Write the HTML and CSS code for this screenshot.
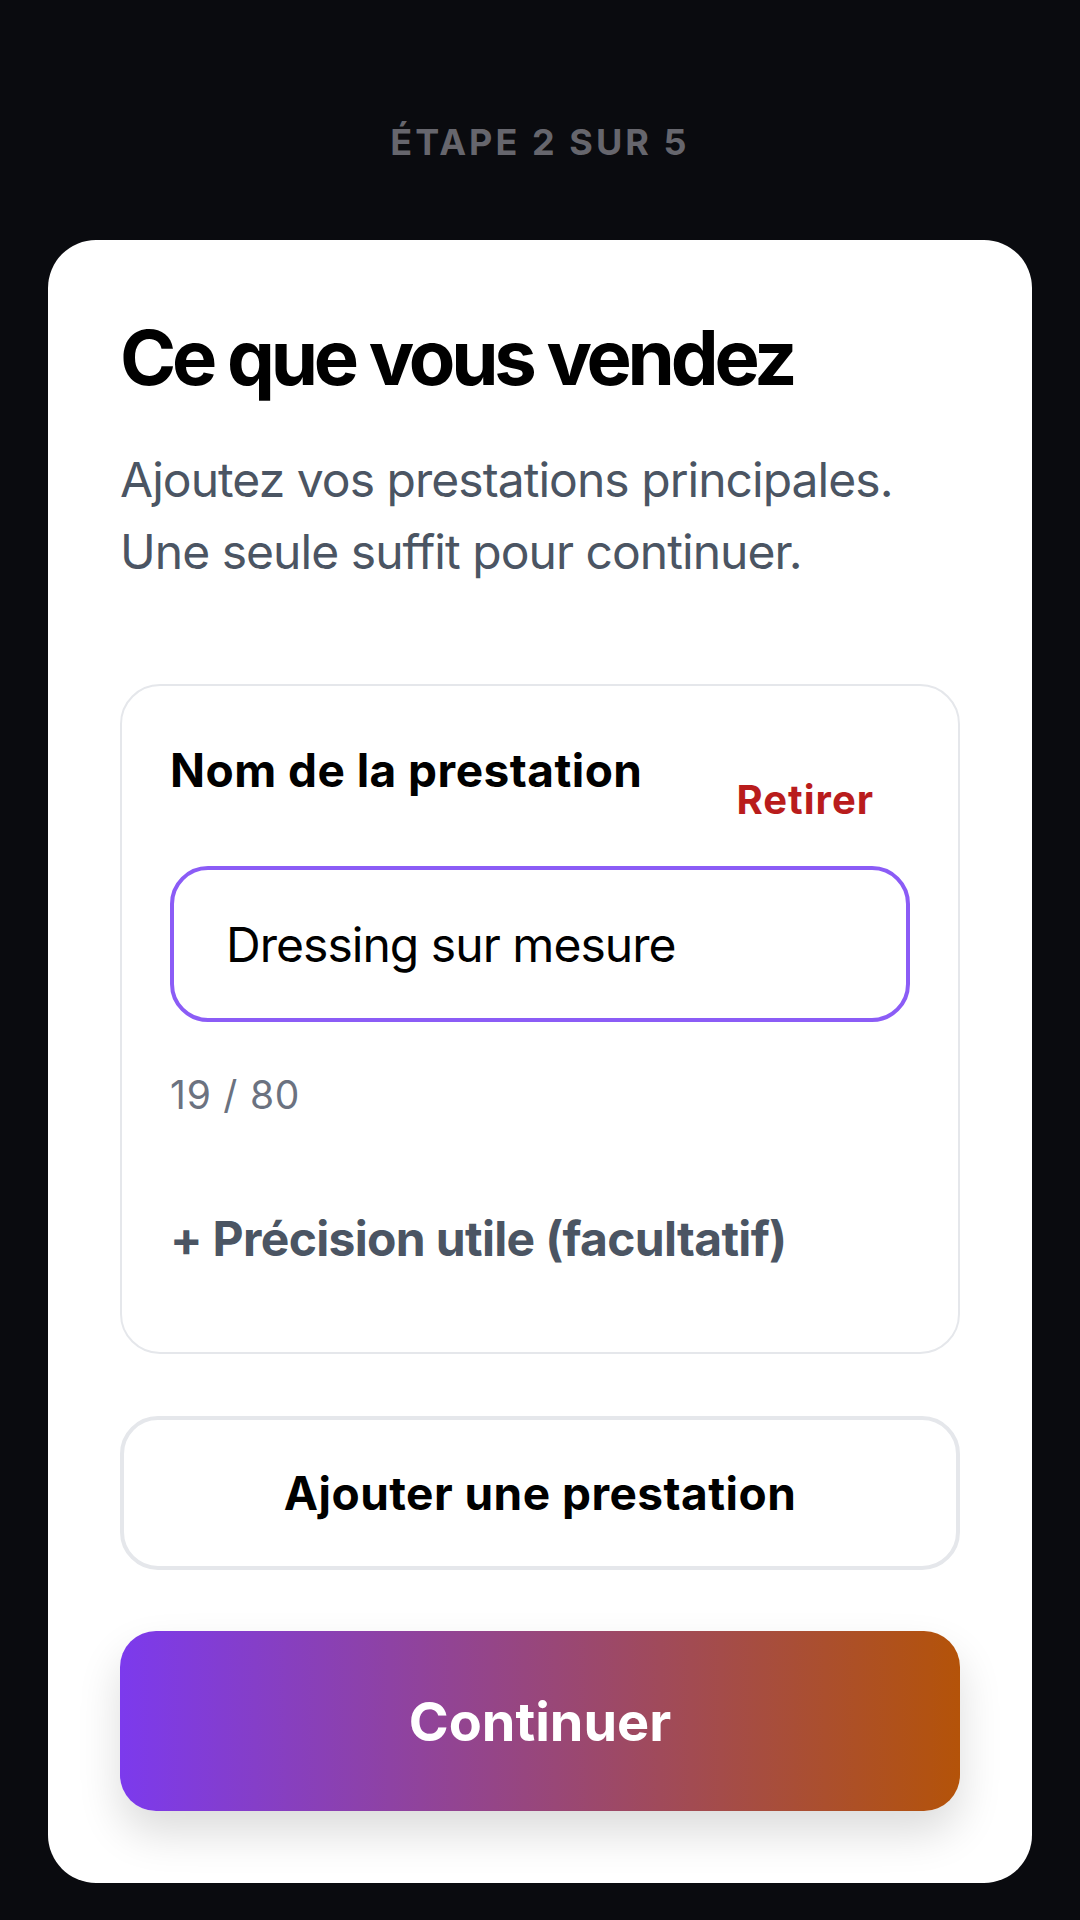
FILE: index.html
```html
<!DOCTYPE html>
<html lang="fr">
<head>
<meta charset="utf-8">
<title>Ce que vous vendez</title>
<link rel="stylesheet" href="styles.css">
</head>
<body>
<main class="page">
  <p class="step">ÉTAPE 2 SUR 5</p>
  <section class="card">
    <h1 class="title">Ce que vous vendez</h1>
    <p class="subtitle">Ajoutez vos prestations principales.<br>Une seule suffit pour continuer.</p>

    <div class="item">
      <div class="item-head">
        <label class="item-label" for="name">Nom de la prestation</label>
        <button class="remove" type="button">Retirer</button>
      </div>
      <div class="field">
        <span class="field-text">Dressing sur mesure</span>
      </div>
      <p class="counter">19 / 80</p>
      <button class="extra" type="button">+ Précision utile (facultatif)</button>
    </div>

    <button class="add" type="button">Ajouter une prestation</button>
    <button class="next" type="button">Continuer</button>
  </section>
</main>
</body>
</html>
```

FILE: styles.css
```css
* { box-sizing: border-box; }

html, body {
  margin: 0;
  padding: 0;
  background: #0a0b0f;
}

body {
  font-family: Inter, "Noto Sans", sans-serif;
  min-height: 1920px;
}

.page {
  padding: 121px 48px 36px;
  display: flex;
  flex-direction: column;
}

.step {
  margin: 0;
  text-align: center;
  font-size: 36px;
  line-height: 43px;
  font-weight: 700;
  letter-spacing: 0.085em;
  color: #66666d;
}

.card {
  margin-top: 76px;
  background: #ffffff;
  border-radius: 48px;
  padding: 72px;
  display: flex;
  flex-direction: column;
}

.title {
  margin: 0;
  font-size: 76px;
  line-height: 91px;
  font-weight: 700;
  color: #000;
  letter-spacing: -0.055em;
}

.subtitle {
  margin: 41px 0 0;
  font-size: 48px;
  line-height: 72px;
  font-weight: 400;
  letter-spacing: -0.02em;
  color: #4b5563;
}

.item {
  margin-top: 96px;
  border: 2px solid #e5e7eb;
  border-radius: 40px;
  padding: 56px 48px;
  display: flex;
  flex-direction: column;
}

.item-head {
  display: flex;
  justify-content: space-between;
  align-items: flex-start;
}

.item-label {
  font-size: 46px;
  line-height: 57px;
  font-weight: 700;
  letter-spacing: 0.01em;
  color: #000;
}

.remove {
  font-family: inherit;
  background: none;
  border: 0;
  padding: 34px 36px;
  font-size: 40px;
  line-height: 48px;
  font-weight: 700;
  letter-spacing: 0.025em;
  color: #b91c1c;
}

.field {
  margin-top: 8px;
  height: 156px;
  border: 4px solid #8b5cf6;
  border-radius: 38px;
  padding: 0 52px;
  display: flex;
  align-items: center;
}

.field-text {
  font-size: 48px;
  letter-spacing: -0.02em;
  color: #000;
}

.counter {
  margin: 46px 0 0;
  font-size: 39px;
  line-height: 53px;
  letter-spacing: 0.02em;
  color: #6b7280;
}

.extra {
  align-self: flex-start;
  margin-top: 61px;
  font-family: inherit;
  background: none;
  border: 0;
  padding: 28px 0;
  font-size: 48px;
  line-height: 58px;
  font-weight: 700;
  letter-spacing: -0.014em;
  color: #4b5563;
  text-align: left;
}

.add {
  margin-top: 62px;
  height: 154px;
  font-family: inherit;
  background: #fff;
  border: 4px solid #e5e7eb;
  border-radius: 38px;
  font-size: 46px;
  font-weight: 700;
  letter-spacing: 0.01em;
  color: #000;
}

.next {
  margin-top: 61px;
  height: 180px;
  font-family: inherit;
  border: 0;
  border-radius: 36px;
  background: linear-gradient(90deg, #7c3aed 0%, #b45309 100%);
  box-shadow: 0 22px 44px rgba(0, 0, 0, 0.14);
  font-size: 54px;
  font-weight: 700;
  color: #fff;
}
```
